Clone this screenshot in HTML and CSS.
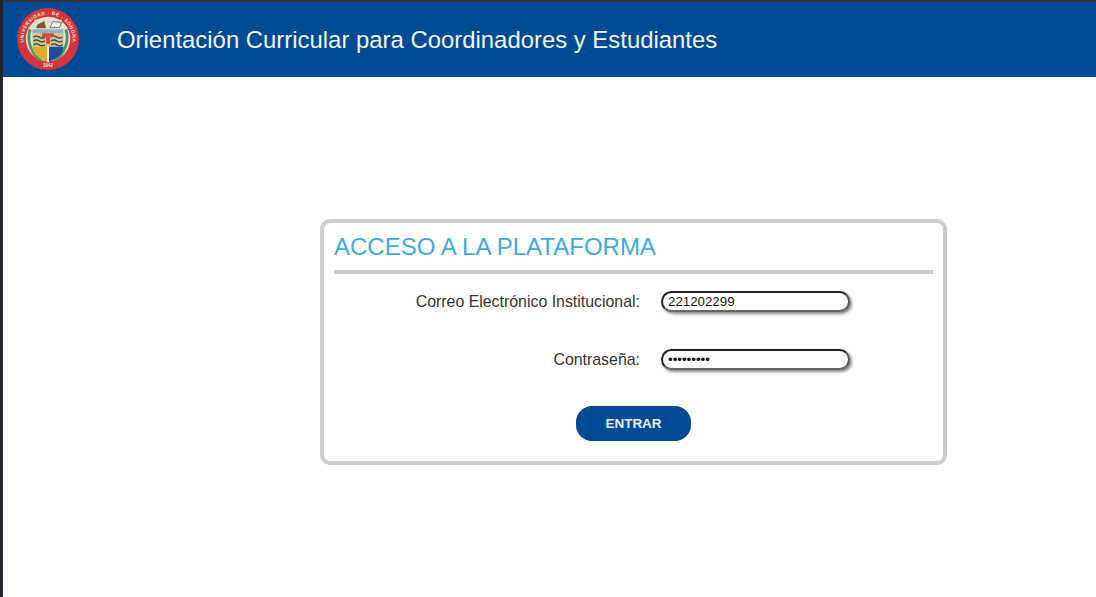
FILE: index.html
```html
<!DOCTYPE html>
<html lang="es">
<head>
<meta charset="utf-8">
<title>Orientación Curricular</title>
<link rel="stylesheet" href="styles.css">
</head>
<body>
<div class="page">
  <header class="header">
    <svg class="logo" width="62" height="62" viewBox="0 0 64 64" aria-label="Universidad de Sonora">
      <defs><path id="arc" d="M7.5 38 A25.2 25.2 0 1 1 56.5 38"/></defs>
      <circle cx="32" cy="32" r="32" fill="#d5333d"/>
      <circle cx="32" cy="32" r="23" fill="#dfe7de"/>
      <text class="logo-text"><textPath href="#arc" startOffset="50%" text-anchor="middle">UNIVERSIDAD · DE · SONORA</textPath></text>
      <path d="M13.5 22 C10 34 14 47 25 54 M50.5 22 C54 34 50 47 39 54" fill="none" stroke="#4f9460" stroke-width="3"/>
      <path d="M18 12 H46 V22 H18Z" fill="#e3dfc6"/>
      <path d="M20 21 C20 15 25 17 28 13 L30 21Z" fill="#7a5a24"/>
      <path d="M34 20 L37 14 L46 15 L44 20Z" fill="#f6f6f2" stroke="#5a6270" stroke-width=".9"/>
      <path d="M16 22 H48 V26 H16Z" fill="#8fb2c9"/>
      <path d="M16 26 H48 V40 H16Z" fill="#d8c47c"/>
      <path d="M17 30 q3 -2 6 0 t6 0 M35 30 q3 -2 6 0 t6 0 M17 34 q3 -2 6 0 t6 0 M35 34 q3 -2 6 0 t6 0 M17 38 q3 -2 6 0 t6 0 M35 38 q3 -2 6 0 t6 0" fill="none" stroke="#2a4c6e" stroke-width="1.4"/>
      <path d="M26 26 H38 V30 H34 V37 H30 V30 H26Z" fill="#d64a3c"/>
      <path d="M16 40 H31 V55.5 C23 52 16 48 16 40Z" fill="#dcae2e"/>
      <path d="M33 40 H48 C48 48 41 52 33 55.5Z" fill="#1f4b98"/>
      <path d="M31 40 H33 V56 H31Z" fill="#f2f2ee"/>
      <text class="logo-year" x="32" y="61.3" text-anchor="middle">1942</text>
    </svg>
    <h1 class="site-title">Orientación Curricular para Coordinadores y Estudiantes</h1>
  </header>
  <main class="main">
    <form class="card">
      <h2 class="card-title">ACCESO A LA PLATAFORMA</h2>
      <div class="fields">
        <label class="field-label" for="correo">Correo Electrónico Institucional:</label>
        <input class="field-input" id="correo" type="text" value="221202299">
        <label class="field-label" for="clave">Contraseña:</label>
        <input class="field-input" id="clave" type="password" value="123456789">
      </div>
      <div class="actions">
        <button class="submit" type="button">ENTRAR</button>
      </div>
    </form>
  </main>
</div>
</body>
</html>
```

FILE: styles.css
```css
* { box-sizing: border-box; }
html, body { height: 100%; }
body {
  margin: 0;
  background: #20262b;
  font-family: "Liberation Sans", Arial, sans-serif;
  overflow: hidden;
}
.page {
  height: 597px;
  margin-left: 3px;
  padding-top: 2px;
  background: #2f3336;
  display: flex;
  flex-direction: column;
}
.header {
  height: 75px;
  flex: none;
  background: #004a93;
  display: flex;
  align-items: center;
  gap: 38px;
  padding-left: 14px;
}
.logo { flex: none; margin-top: -1px; }
.logo-text { font: bold 5px "Liberation Sans", sans-serif; fill: #f3e8d8; letter-spacing: .55px; }
.logo-year { font: bold 4.6px "Liberation Sans", sans-serif; fill: #f6f0e6; }
.site-title {
  margin: 0;
  font-size: 23.9px;
  font-weight: 400;
  color: #f2f6fa;
}
.main {
  flex: 1;
  background: #fff;
  padding: 142px 0 0 317px;
}
.card {
  width: 627px;
  height: 246px;
  border: 4px solid #cccccc;
  border-radius: 10px;
  padding: 10px 10px 0;
}
.card-title {
  margin: 0;
  height: 41px;
  border-bottom: 4px solid #cccccc;
  font-size: 24px;
  line-height: 28px;
  font-weight: 400;
  color: #3eaadf;
}
.fields {
  display: grid;
  grid-template-columns: 306px 189px;
  column-gap: 21px;
  row-gap: 37px;
  align-items: center;
  padding-top: 17px;
}
.field-label {
  text-align: right;
  font-size: 15.9px;
  color: #333;
}
.field-input {
  height: 21px;
  width: 189px;
  border: 2px solid;
  border-color: #222 #555 #666 #222;
  border-radius: 11px;
  padding: 0 5px;
  font: 13.3px "Liberation Sans", Arial, sans-serif;
  color: #111;
  background: #fff;
  box-shadow: 2px 2px 3px #888;
  outline: none;
}
.actions {
  display: flex;
  padding: 36px 0 0 242px;
}
.submit {
  width: 115px;
  height: 35px;
  border: 0;
  border-radius: 16px;
  background: #004a93;
  color: #e8eef5;
  font: bold 13.5px "Liberation Sans", Arial, sans-serif;
}
```
